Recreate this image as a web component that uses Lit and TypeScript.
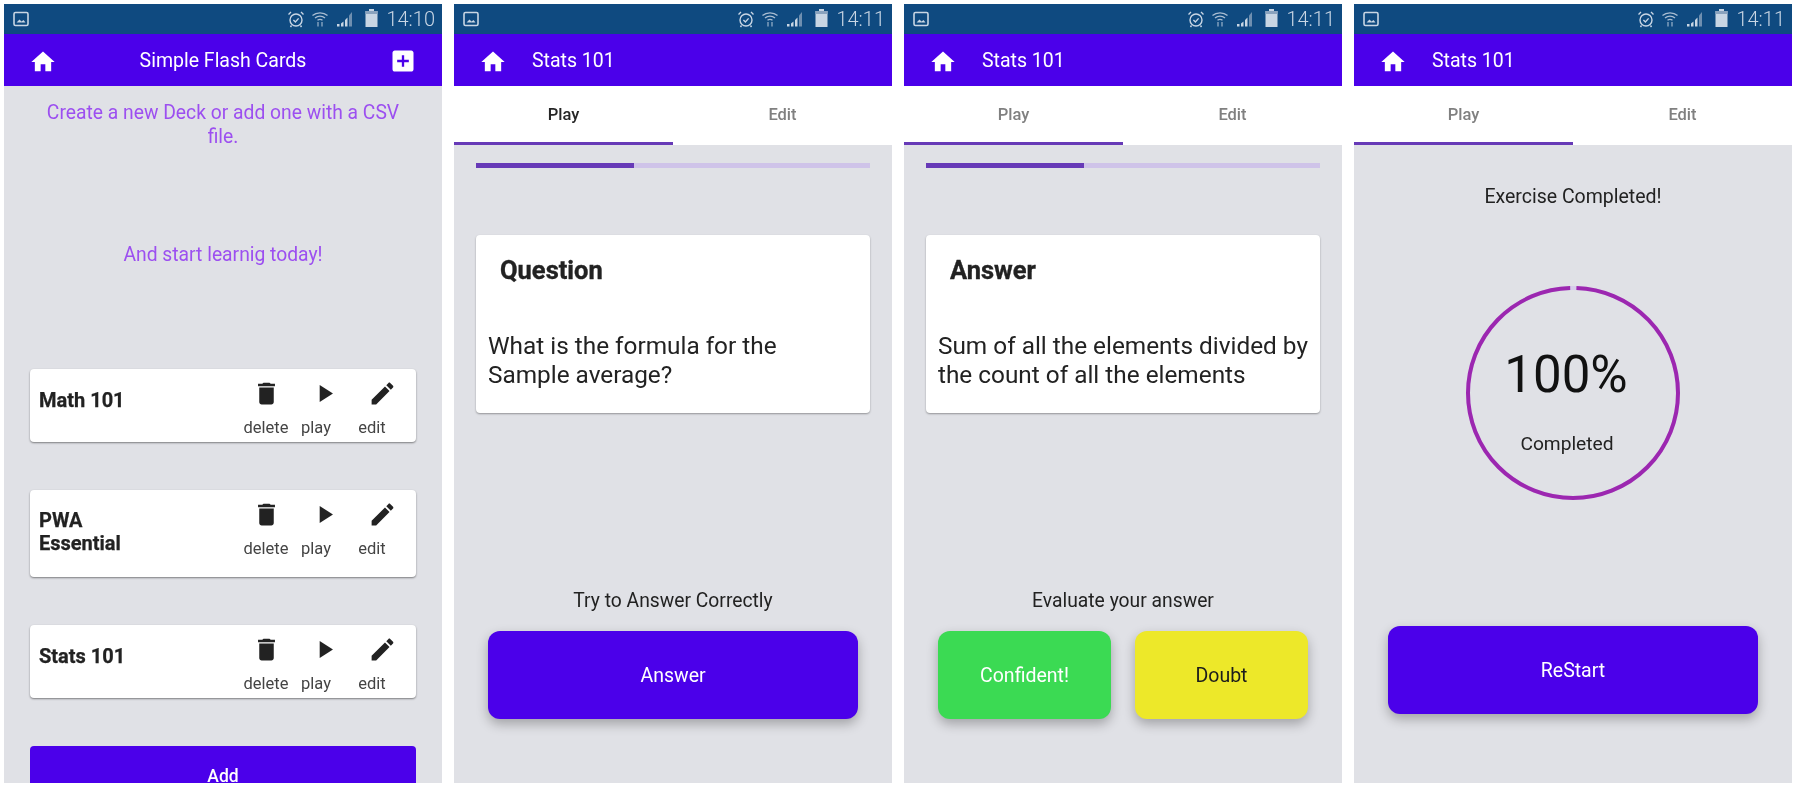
import { LitElement, html, css, svg } from "lit";
import { customElement } from "lit/decorators.js";

const P = {
  home: "M10 20v-6h4v6h5v-8h3L12 3 2 12h3v8z",
  del: "M6 19c0 1.1.9 2 2 2h8c1.1 0 2-.9 2-2V7H6v12zM19 4h-3.5l-1-1h-5l-1 1H5v2h14V4z",
  play: "M8 5v14l11-7z",
  edit: "M3 17.25V21h3.75L17.81 9.94l-3.75-3.75L3 17.25zM20.71 7.04c.39-.39.39-1.02 0-1.41l-2.34-2.34c-.39-.39-1.02-.39-1.41 0l-1.83 1.83 3.75 3.75 1.83-1.83z",
  add: "M19 3H5c-1.11 0-2 .9-2 2v14c0 1.1.89 2 2 2h14c1.1 0 2-.9 2-2V5c0-1.1-.9-2-2-2zm-2 10h-4v4h-2v-4H7v-2h4V7h2v4h4v2z",
};
const icon = (d: string, cls = "ic") => html`<svg class=${cls} viewBox="0 0 24 24" fill="currentColor"><path d=${d}></path></svg>`;

const statusBar = (time: string) => html`<div class="status">
  <svg class="st-img" viewBox="0 0 16 16"><rect x="1" y="1.5" width="14" height="13" rx="1.5" fill="none" stroke="#c9d6e4" stroke-width="1.6"></rect><path d="M3.5 11.5l3-3 2 2 2-1.5 2 2.5z" fill="#c9d6e4"></path></svg>
  <span class="st-fill"></span>
  <svg class="st-alarm" viewBox="0 0 18 18" fill="none" stroke="#c9d6e4" stroke-width="1.4"><circle cx="9" cy="10" r="6"></circle><path d="M6.4 10l2 2 3.2-3.6M1.5 4.5L4 2M16.5 4.5L14 2M4.5 15.5l-1 1.5M13.5 15.5l1 1.5"></path></svg>
  <svg class="st-wifi" viewBox="0 0 18 18" fill="none" stroke="#a9bdd2" stroke-width="1.3"><path d="M1.5 5.5c4-3.6 11-3.6 15 0M4 8c2.8-2.4 7.2-2.4 10 0M6.5 10.3c1.5-1.2 3.5-1.2 5 0"></path><path d="M7 12v4.5M11 12v4.5" stroke-width="1.1"></path></svg>
  <svg class="st-sig" viewBox="0 0 18 18"><path d="M1 16.5h2.500v-2.500H1zM5 16.500h2.500v-5L5 13.500zM9 16.500h2.500V7.500L9 10z" fill="#c9d6e4"></path><path d="M13 16.500h3V2l-3 3.500z" fill="#6f8fb0"></path></svg>
  <svg class="st-bat" viewBox="0 0 13 18"><path d="M4 0h5v2h3.500v16H.5V2H4z" fill="#c9d6e4"></path><rect x=".5" y="2" width="12" height="3" fill="#8aa3be"></rect></svg>
  <span class="st-time">${time}</span>
</div>`;

const appBar = (title: string) => html`<div class="bar">
  ${icon(P.home, "home")}<span class="bar-title">${title}</span>
</div>`;

const tabs = (playActive: boolean) => html`<div class="tabs">
  <div class="tab on ${playActive ? "dark" : ""}">Play</div>
  <div class="tab">Edit</div>
</div>`;

const deck = (name: unknown, cls: string) => html`<div class="deck ${cls}">
  <div class="deck-name">${name}</div>
  <div class="deck-acts">
    <div class="act a1">${icon(P.del)}<span>delete</span></div>
    <div class="act a2">${icon(P.play)}<span>play</span></div>
    <div class="act a3">${icon(P.edit)}<span>edit</span></div>
  </div>
</div>`;

const progress = html`<div class="prog"><div class="prog-fill" style="width:40%"></div></div>`;
const qcard = (title: string, text: unknown) => html`<div class="qcard"><div class="q-title">${title}</div><div class="q-text">${text}</div></div>`;

@customElement("app-root")
export class AppRoot extends LitElement {
  static styles = css`
    :host { display: block; width: 1799px; height: 789px; background: #fff; font-family: Roboto, "Noto Sans", sans-serif; overflow: hidden; }
    * { box-sizing: border-box; }
    .wrap { display: flex; gap: 12px; padding: 4px 0 0 4px; height: 789px; align-items: flex-start; filter: blur(.35px); }
    .phone { width: 438px; height: 779px; background: #e0e1e6; display: flex; flex-direction: column; flex: none; }
    .status { height: 30px; flex: none; background: #0f4a80; display: flex; align-items: center; padding: 0 7px 0 9px; }
    .st-img { width: 16px; height: 16px; }
    .st-fill { flex: 1; }
    .st-alarm { width: 18px; height: 18px; margin-right: 6px; }
    .st-wifi { width: 18px; height: 18px; margin-right: 7px; }
    .st-sig { width: 18px; height: 18px; margin-right: 11px; }
    .st-bat { width: 13px; height: 18px; margin-right: 8px; margin-top: -2px; }
    .st-time { color: #c9d6e4; font-size: 20px; font-weight: 300; line-height: 30px; }
    .bar { height: 52px; flex: none; background: #4b00ea; color: #fff; display: flex; align-items: center; padding-left: 25px; position: relative; }
    .home { width: 28px; height: 28px; margin-top: 4px; }
    .bar-title { font-size: 19.5px; margin-left: 25px; line-height: 52px; margin-top: 2px; }
    .bar.center .bar-title { position: absolute; left: 0; right: 0; margin: 0; text-align: center; top: 1px; }
    .plus { position: absolute; left: 385px; top: 13px; width: 28px; height: 28px; color: #fff; }
    .intro { color: #9c4ff0; font-size: 19.3px; line-height: 24px; text-align: center; padding: 15px 30px 0; }
    .intro2 { color: #9c4ff0; font-size: 19.3px; line-height: 24px; text-align: center; margin-top: 94px; }
    .decks { display: flex; flex-direction: column; padding: 0 26px; margin-top: 102px; }
    .deck { background: #fff; border-radius: 4px; box-shadow: 0 1px 2px rgba(0,0,0,.45); display: flex; padding: 0 0 0 9px; position: relative; flex: none; }
    .d1 { height: 73px; } .d2 { height: 87px; margin-top: 48px; } .d3 { height: 73px; margin-top: 48px; }
    .deck-name { font-weight: 700; font-size: 20px; line-height: 23px; color: #222; padding-top: 20px; width: 95px; -webkit-text-stroke: .25px #222; }
    .d2 .deck-name { padding-top: 19px; }
    .deck-acts { margin-left: auto; display: flex; }
    .act { display: flex; flex-direction: column; align-items: center; color: #222; padding-top: 10px; }
    .act span { font-size: 16.5px; line-height: 20px; color: #444; margin-top: 10px; }
    .a1 { width: 59px; } .a2 { width: 41px; } .a3 { width: 71px; margin-right: 8.5px; }
    .a2 .ic { margin-left: 16px; } .a3 .ic { margin-left: 20px; }
    .ic { width: 29px; height: 29px; display: block; flex: none; }
    .addbtn { margin: 48px 26px 0; height: 37px; padding-top: 23px; background: #4b00ea; color: #fff; border-radius: 4px 4px 0 0; text-align: center; font-size: 17.5px; font-weight: 500; line-height: 14px; flex: none; }
    .tabs { display: flex; height: 59px; background: #fff; flex: none; }
    .tab { flex: 1; text-align: center; font-size: 16.5px; font-weight: 500; line-height: 58px; color: #808080; border-bottom: 3px solid transparent; }
    .tab.on { border-bottom-color: #673ab7; }
    .tab.dark { color: #262626; }
    .prog { margin: 18px 22px 0; height: 5px; background: #cfc3e9; flex: none; }
    .prog-fill { height: 100%; background: #673ab7; }
    .qcard { margin: 67px 22px 0; height: 178px; background: #fff; border-radius: 4px; box-shadow: 0 1px 2px rgba(0,0,0,.35); flex: none; padding: 0 0 0 12px; color: #222; }
    .q-title { font-size: 25.5px; font-weight: 700; padding: 20px 0 0 12px; line-height: 30px; -webkit-text-stroke: .35px #222; }
    .q-text { font-size: 24.35px; line-height: 29px; margin-top: 46px; white-space: nowrap; }
    .hint { text-align: center; font-size: 19.3px; line-height: 24px; color: #222; margin-top: 176px; }
    .btns { display: flex; gap: 24px; padding: 0 34px; margin-top: 18px; }
    .btn { flex: 1; height: 88px; border-radius: 12px; background: #4b00ea; color: #fff; font-size: 19.5px; display: flex; align-items: center; justify-content: center; box-shadow: 0 5px 12px rgba(0,0,0,.28); }
    .btn.green { background: #3bda53; }
    .btn.yellow { background: #ede829; color: #1c1c1c; }
    .done { text-align: center; font-size: 19.5px; line-height: 24px; color: #222; margin-top: 40px; }
    .ring { position: relative; width: 214px; height: 214px; margin: 77px auto 0; flex: none; }
    .ring svg { display: block; }
    .ring-val { position: absolute; top: 57px; left: -7px; right: 7px; text-align: center; font-size: 51px; line-height: 64px; color: #111; }
    .ring-lab { position: absolute; top: 146px; left: -6px; right: 6px; text-align: center; font-size: 19.2px; line-height: 24px; color: #222; }
    .btns.restart { margin-top: 126px; }
  `;

  render() {
    return html`<div class="wrap">
      <div class="phone">
        ${statusBar("14:10")}
        <div class="bar center">${icon(P.home, "home")}<span class="bar-title">Simple Flash Cards</span>${icon(P.add, "plus")}</div>
        <div class="intro">Create a new Deck or add one with a CSV file.</div>
        <div class="intro2">And start learnig today!</div>
        <div class="decks">
          ${deck("Math 101", "d1")}
          ${deck(html`PWA<br />Essential`, "d2")}
          ${deck("Stats 101", "d3")}
        </div>
        <div class="addbtn">Add</div>
      </div>
      <div class="phone">
        ${statusBar("14:11")}${appBar("Stats 101")}${tabs(true)}${progress}
        ${qcard("Question", html`What is the formula for the<br />Sample average?`)}
        <div class="hint">Try to Answer Correctly</div>
        <div class="btns"><div class="btn">Answer</div></div>
      </div>
      <div class="phone">
        ${statusBar("14:11")}${appBar("Stats 101")}${tabs(false)}${progress}
        ${qcard("Answer", html`Sum of all the elements divided by<br />the count of all the elements`)}
        <div class="hint">Evaluate your answer</div>
        <div class="btns"><div class="btn green">Confident!</div><div class="btn yellow">Doubt</div></div>
      </div>
      <div class="phone">
        ${statusBar("14:11")}${appBar("Stats 101")}${tabs(false)}
        <div class="done">Exercise Completed!</div>
        <div class="ring">
          <svg width="214" height="214" viewBox="0 0 214 214">
            ${svg`<circle cx="107" cy="107" r="105" fill="none" stroke="#d6cdea" stroke-width="4"></circle>
            <circle cx="107" cy="107" r="105" fill="none" stroke="#9c27b0" stroke-width="4" stroke-dasharray="652.7 7" stroke-dashoffset="-3.5" transform="rotate(-90 107 107)"></circle>`}
          </svg>
          <div class="ring-val">100%</div>
          <div class="ring-lab">Completed</div>
        </div>
        <div class="btns restart"><div class="btn">ReStart</div></div>
      </div>
    </div>`;
  }
}
